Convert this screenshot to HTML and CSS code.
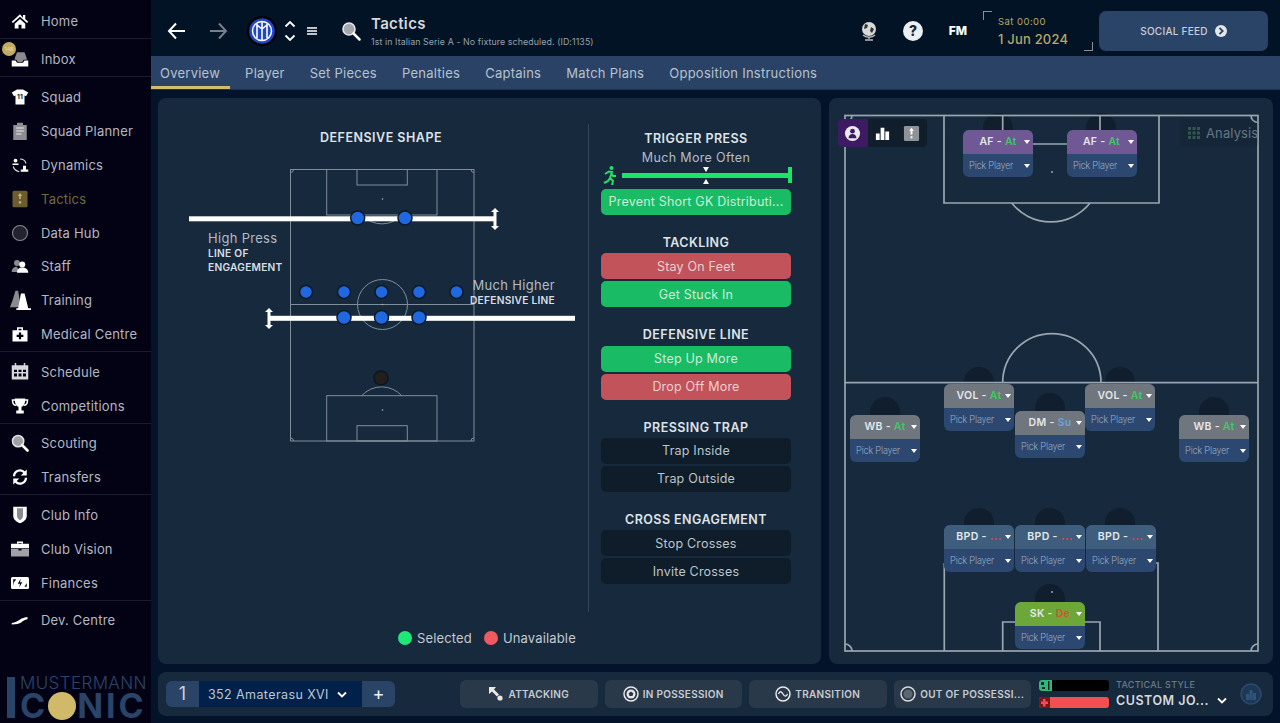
FILE: index.html
```html
<!DOCTYPE html>
<html lang="en">
<head>
<meta charset="utf-8">
<title>Tactics</title>
<link rel="stylesheet" href="styles.css">
</head>
<body>
<div class="app">
  <nav class="sidebar">
    <div class="group g-first">
      <a class="row"><svg class="ico" viewBox="0 0 24 24"><path fill="#fff" d="M12 3 1 13l1.600 1.700L12 6.400l9.400 8.300L23 13l-4-3.600V4h-3v3.700zM5 15.500 12 9.300l7 6.200V22h-5v-5h-4v5H5z"/></svg><span>Home</span></a>
    </div>
    <div class="group">
      <a class="row"><svg class="ico" viewBox="0 0 24 24"><path fill="#fff" d="M1 14h5l2 3h8l2-3h5v8H1z"/><path fill="#8a8a90" d="M5 11 8 3h10l3 8v2h-4l-2 3H9l-2-3H5z"/></svg><span>Inbox</span><b class="badge">148</b></a>
    </div>
    <div class="group g-squad">
      <a class="row"><svg class="ico" viewBox="0 0 24 24"><path fill="#fff" d="M8 2h8l7 4-3 5-2-1v12H6V10l-2 1-3-5z"/><text x="12" y="14" class="shirt-no">11</text></svg><span>Squad</span></a>
      <a class="row"><svg class="ico" viewBox="0 0 24 24"><path fill="#8d8d93" d="M3 4h5V1h8v3h5v20H3z"/><path fill="none" stroke="#eee" stroke-width="1.500" d="M7 8h10M7 12h10M7 16h7"/></svg><span>Squad Planner</span></a>
      <a class="row"><svg class="ico" viewBox="0 0 24 24"><circle cx="6" cy="6" r="2.500" fill="#fff"/><path fill="#fff" d="M2 10h8v2H2zM16 13h4v5h3v3h-10v-3h3z"/><path fill="none" stroke="#ddd" stroke-width="1.500" d="M12 4c4 0 7 2 8 6M3 14c1 4 4 6 8 7"/></svg><span>Dynamics</span></a>
      <a class="row tactics"><svg class="ico" viewBox="0 0 24 24"><rect x="2" y="1" width="20" height="22" rx="2" fill="#6b5d30"/><path fill="#c9b574" d="M12 4l3 4h-2v4h-2V8H9zM10.500 15h3v3h-3z"/></svg><span>Tactics</span></a>
      <a class="row"><svg class="ico" viewBox="0 0 24 24"><circle cx="12" cy="12" r="10" fill="#23232f" stroke="#85858f" stroke-width="1.500"/></svg><span>Data Hub</span></a>
      <a class="row"><svg class="ico" viewBox="0 0 24 24"><circle cx="8" cy="8" r="4" fill="#8a8a90"/><path fill="#8a8a90" d="M1 20c0-5 3-7 7-7l3 7z"/><circle cx="15" cy="10" r="4" fill="#fff"/><path fill="#fff" d="M8 21c0-5 3-7 7-7s8 2 8 7z"/></svg><span>Staff</span></a>
      <a class="row"><svg class="ico ico-wide" viewBox="0 0 24 24"><path fill="#8a8a90" d="M7 2h3l3 18H1l3-8z"/><path fill="#fff" d="M13 5h4l4 16h3v2H8v-2h2z"/></svg><span>Training</span></a>
      <a class="row"><svg class="ico" viewBox="0 0 24 24"><path fill="#fff" d="M8 3h8v4h6v15H2V7h6zm2 2v2h4V5z"/><path fill="#020214" d="M10.500 10h3v3h3v3h-3v3h-3v-3h-3v-3h3z"/></svg><span>Medical Centre</span></a>
    </div>
    <div class="group">
      <a class="row"><svg class="ico" viewBox="0 0 24 24"><path fill="#d8d8dc" d="M1 3h4V0h2v3h10V0h2v3h4v19H1z"/><path fill="#020214" d="M4 9h4v3H4zM10 9h4v3h-4zM16 9h4v3h-4zM4 14h4v4H4zM10 14h4v4h-4zM16 14h4v4h-4z"/></svg><span>Schedule</span></a>
      <a class="row"><svg class="ico" viewBox="0 0 24 24"><path fill="none" stroke="#fff" stroke-width="2" d="M6 4H2c0 4 2 7 5 7M18 4h4c0 4-2 7-5 7"/><path fill="#fff" d="M5 2h14c0 7-2 10-5 11v5h3v4H7v-4h3v-5C7 12 5 9 5 2z"/></svg><span>Competitions</span></a>
    </div>
    <div class="group">
      <a class="row"><svg class="ico" viewBox="0 0 24 24"><circle cx="9.500" cy="9.500" r="7.500" fill="#a0a0a6" stroke="#e4e4e8" stroke-width="2"/><path stroke="#fff" stroke-width="3.500" stroke-linecap="round" d="M15 15l7 7"/></svg><span>Scouting</span></a>
      <a class="row"><svg class="ico" viewBox="0 0 24 24"><path fill="none" stroke="#fff" stroke-width="3" d="M4 11a8 8 0 0 1 14-5M20 13a8 8 0 0 1-14 5"/><path fill="#fff" d="M21 2v8h-8zM3 22v-8h8z"/></svg><span>Transfers</span></a>
    </div>
    <div class="group">
      <a class="row"><svg class="ico" viewBox="0 0 24 24"><path fill="#fff" d="M3 1h18v12c0 5-4 8-9 10-5-2-9-5-9-10z"/><path fill="#8a8a90" d="M8 3h8v10c0 3-2 5-4 6-2-1-4-3-4-6z"/></svg><span>Club Info</span></a>
      <a class="row"><svg class="ico" viewBox="0 0 24 24"><path fill="#fff" d="M8 5V2h8v3h-2V4h-4v1z"/><path fill="#fff" d="M0 5h24v6H0z"/><path fill="#a0a0a6" d="M0 12h10v2h4v-2h10v10H0z"/></svg><span>Club Vision</span></a>
      <a class="row"><svg class="ico" viewBox="0 0 24 24"><rect y="4" width="24" height="16" rx="2" fill="#fff"/><path fill="#020214" d="M3 7h4l-3 4-1 5zM21 7v5l-3 5h3zM13 6l-4 7h3l-1 5 4-7h-3z"/></svg><span>Finances</span></a>
    </div>
    <div class="group g-last">
      <a class="row"><svg class="ico" viewBox="0 0 24 24"><path fill="#fff" d="M1 16c5-1 7-2 10-4 3-2 5-3 11-4v3c-4 1-6 2-8 4-3 2-7 3-13 3z"/></svg><span>Dev. Centre</span></a>
    </div>
    <div class="logo">
      <div class="logo-bar"></div>
      <div class="logo-text">
        <div class="logo-top">MUSTERMANN</div>
        <div class="logo-main">C<i class="logo-o"></i>NIC</div>
      </div>
    </div>
  </nav>

  <div class="main">
    <header class="topbar">
      <svg class="tb-arrow" viewBox="0 0 22 22"><path fill="none" stroke="#fff" stroke-width="2" d="M19 11H3M10 3.500 3 11l7 7.500"/></svg>
      <svg class="tb-arrow tb-fwd" viewBox="0 0 22 22"><path fill="none" stroke="#777f88" stroke-width="2" d="M3 11h16M12 3.500l7 7.500-7 7.500"/></svg>
      <svg class="tb-club" viewBox="0 0 30 30"><circle cx="15" cy="15" r="15" fill="#000"/><circle cx="15" cy="15" r="12.800" fill="#1f47c7"/><circle cx="15" cy="15" r="9.500" fill="none" stroke="#fff" stroke-width="1.500"/><path fill="none" stroke="#fff" stroke-width="1.600" d="M10 8v14M15 6v18M20 8v14M10 9l5 4M20 9l-5 4"/></svg>
      <div class="tb-updown">
        <svg viewBox="0 0 12 8"><path fill="none" stroke="#fff" stroke-width="1.800" d="M1.500 6.500 6 2l4.500 4.500"/></svg>
        <svg viewBox="0 0 12 8"><path fill="none" stroke="#fff" stroke-width="1.800" d="M1.500 1.500 6 6l4.500-4.500"/></svg>
      </div>
      <svg class="tb-menu" viewBox="0 0 10 8"><path stroke="#fff" stroke-width="1.500" d="M0 1h10M0 4h10M0 7h10"/></svg>
      <svg class="tb-search" viewBox="0 0 20 20"><circle cx="8" cy="8" r="6" fill="#a4a8ad" stroke="#e6e6e6" stroke-width="1.600"/><path stroke="#fff" stroke-width="2.500" stroke-linecap="round" d="m12.500 12.500 6 6"/></svg>
      <div class="tb-title">
        <div class="tb-name">Tactics</div>
        <div class="tb-sub">1st in Italian Serie A - No fixture scheduled. (ID:1135)</div>
      </div>
      <div class="tb-right">
        <svg class="tb-globe" viewBox="0 0 20 20"><circle cx="10" cy="8" r="7" fill="#d8d8d8"/><path fill="#333" d="M6 3l3 1-1 3-3 1zM12 6l3 2-2 4-2-2z"/><path fill="none" stroke="#bbb" stroke-width="1.400" d="M4 14c3 3 9 3 12 0M10 16v2M6 19h8"/></svg>
        <div class="tb-help">?</div>
        <div class="tb-fm">FM</div>
        <div class="tb-date">
          <div class="tb-day">Sat 00:00</div>
          <div class="tb-full">1 Jun 2024</div>
        </div>
        <button class="social">SOCIAL FEED <svg viewBox="0 0 12 12"><circle cx="6" cy="6" r="6" fill="#e4e7ea"/><path fill="none" stroke="#2a4468" stroke-width="1.800" d="M4.500 2.800 7.700 6l-3.200 3.200"/></svg></button>
      </div>
    </header>

    <div class="tabs">
      <a class="tab on">Overview</a>
      <a class="tab">Player</a>
      <a class="tab">Set Pieces</a>
      <a class="tab">Penalties</a>
      <a class="tab">Captains</a>
      <a class="tab">Match Plans</a>
      <a class="tab">Opposition Instructions</a>
    </div>

    <div class="content">
      <section class="panel p-left">
        <div class="shape">
          <h3 class="shape-title">DEFENSIVE SHAPE</h3>
          <div class="diagram">
            <svg class="diagram-svg" viewBox="158 160 430 290">
              <g class="pl-thin">
                <rect x="290.500" y="169.500" width="183.500" height="271.500"/>
                <rect x="326.700" y="169.500" width="110.300" height="45.500"/>
                <rect x="357" y="169.500" width="50.300" height="15.500"/>
                <path d="M362 215a27 27 0 0 0 40 0M290.500 304.500H474M361.700 395.700a27 27 0 0 1 40 0M293.500 169.500a3 3 0 0 1-3 3M471 169.500a3 3 0 0 0 3 3M290.500 438a3 3 0 0 1 3 3M471 441a3 3 0 0 1 3-3"/>
                <circle cx="382.500" cy="304.500" r="25"/>
                <rect x="326.700" y="395.700" width="110.300" height="45.300"/>
                <rect x="357" y="425.700" width="50.300" height="15.300"/>
              </g>
              <circle cx="382.500" cy="199" r=".8" fill="#aab4bd"/><circle cx="382.500" cy="410" r=".8" fill="#aab4bd"/><circle cx="382.500" cy="304.500" r=".8" fill="#aab4bd"/>
              <rect x="189" y="216.300" width="305" height="5" fill="#fff"/>
              <rect x="270" y="315.800" width="305" height="5" fill="#fff"/>
              <path fill="#fff" d="M495 208l4 4h-2.500v14H499l-4 4-4-4h2.500v-14H491zM269 308l4 4h-2.500v13H273l-4 4-4-4h2.500v-13H265z"/>
              <g class="dot">
                <circle cx="357.700" cy="218" r="7"/><circle cx="405" cy="218" r="7"/>
                <circle cx="306" cy="292" r="6.500"/><circle cx="344" cy="292" r="6.500"/><circle cx="381.500" cy="292" r="6.500"/><circle cx="419" cy="292" r="6.500"/><circle cx="456.500" cy="292" r="6.500"/>
                <circle cx="344" cy="317.500" r="7"/><circle cx="381.500" cy="317.500" r="7"/><circle cx="419" cy="317.500" r="7"/>
              </g>
              <circle cx="381" cy="378" r="7" fill="#221f1c" stroke="#0c1622" stroke-width="1.500"/>
            </svg>
            <div class="lbl lbl-press"><div class="lbl-val">High Press</div><div class="lbl-key">LINE OF<br>ENGAGEMENT</div></div>
            <div class="lbl lbl-line"><div class="lbl-val">Much Higher</div><div class="lbl-key">DEFENSIVE LINE</div></div>
          </div>
          <div class="legend">
            <i class="leg-dot leg-sel"></i><span>Selected</span>
            <i class="leg-dot leg-un"></i><span>Unavailable</span>
          </div>
        </div>
        <div class="divider"></div>
        <div class="instr">
          <div class="sec">
            <h4>TRIGGER PRESS</h4>
            <div class="sec-val">Much More Often</div>
            <div class="slider">
              <svg class="runner" viewBox="0 0 14 19"><circle cx="8.500" cy="2" r="2" fill="#1ce36a"/><path fill="none" stroke="#1ce36a" stroke-width="2" d="M2 8l4-2.500 3 .5-2 6 3 3-1 4M7 12l-2 3-4 2M8 7l2 3h3"/></svg>
              <div class="track"><i class="tk-down"></i><i class="tk-up"></i></div>
            </div>
            <button class="opt green">Prevent Short GK Distributi...</button>
          </div>
          <div class="sec">
            <h4>TACKLING</h4>
            <button class="opt red">Stay On Feet</button>
            <button class="opt green">Get Stuck In</button>
          </div>
          <div class="sec">
            <h4>DEFENSIVE LINE</h4>
            <button class="opt green">Step Up More</button>
            <button class="opt red">Drop Off More</button>
          </div>
          <div class="sec">
            <h4>PRESSING TRAP</h4>
            <button class="opt dark">Trap Inside</button>
            <button class="opt dark">Trap Outside</button>
          </div>
          <div class="sec">
            <h4>CROSS ENGAGEMENT</h4>
            <button class="opt dark">Stop Crosses</button>
            <button class="opt dark">Invite Crosses</button>
          </div>
        </div>
      </section>

      <section class="panel p-right">
        <svg class="pitch" viewBox="829 98 444 566">
          <g fill="#101e2e">
            <circle cx="998" cy="128" r="15"/><circle cx="1101" cy="128" r="15"/>
            <circle cx="979" cy="382" r="15"/><circle cx="1120" cy="382" r="15"/><circle cx="1050" cy="408" r="15"/>
            <circle cx="885" cy="412" r="15"/><circle cx="1214" cy="412" r="15"/>
            <circle cx="979" cy="523" r="15"/><circle cx="1050" cy="523" r="15"/><circle cx="1120" cy="523" r="15"/><circle cx="1050" cy="599" r="15"/>
          </g>
          <g class="pl-thick">
            <rect x="845" y="115.500" width="413" height="535.500"/>
            <path d="M845 382.700h413M1002.700 382.700a49 49 0 0 1 98.300 0M944 115.500V203h215V115.500M1011.700 203a50 50 0 0 0 78.300 0M1002.700 115.500V144h97.300v-28.500M944.300 651v-88M1158 651v-88h-6M1002.700 651v-29h97.300v29M1251 115.500a7 7 0 0 0 7 7M845 644a7 7 0 0 1 7 7M1251 651a7 7 0 0 1 7-7M852 115.500a7 7 0 0 1-7 7"/>
          </g>
          <circle cx="1052" cy="172" r=".9" fill="#aab4bd"/><circle cx="1052" cy="592" r=".9" fill="#aab4bd"/>
        </svg>

        <div class="pitch-tabs">
          <span class="pt on"><svg viewBox="0 0 18 18"><circle cx="9" cy="9" r="8" fill="#ece9f1"/><circle cx="9" cy="6.500" r="2.500" fill="#3d1b63"/><path fill="#3d1b63" d="M4.800 14c0-3 2-4.500 4.200-4.500s4.200 1.500 4.200 4.500z"/></svg></span>
          <span class="pt"><svg viewBox="0 0 18 18"><path fill="#fff" d="M2 9h4v7H2zM7 3h4v13H7zM12 7h4v9h-4z"/></svg></span>
          <span class="pt"><svg viewBox="0 0 18 18"><rect x="1" y="1" width="16" height="16" rx="1.500" fill="#8f9296"/><path fill="#fff" d="M9 3l2.500 3H10v4H8V6H6.500zM8 12h2v2H8z"/></svg></span>
        </div>
        <div class="analysis"><svg viewBox="0 0 12 12"><path fill="#35564f" d="M0 0h3v3H0zM4.500 0h3v3h-3zM9 0h3v3H9zM0 4.500h3v3H0zM4.500 4.500h3v3h-3zM9 4.500h3v3H9zM0 9h3v3H0zM4.500 9h3v3h-3zM9 9h3v3H9z"/></svg>Analysis</div>

        <div class="card af af1"><div class="c-head">AF - <em class="at">At</em></div><div class="c-body"><span class="pick">Pick Player</span></div></div>
        <div class="card af af2"><div class="c-head">AF - <em class="at">At</em></div><div class="c-body"><span class="pick">Pick Player</span></div></div>
        <div class="card grey vol1"><div class="c-head">VOL - <em class="at">At</em></div><div class="c-body"><span class="pick">Pick Player</span></div></div>
        <div class="card grey vol2"><div class="c-head">VOL - <em class="at">At</em></div><div class="c-body"><span class="pick">Pick Player</span></div></div>
        <div class="card grey dm"><div class="c-head">DM - <em class="su">Su</em></div><div class="c-body"><span class="pick">Pick Player</span></div></div>
        <div class="card grey wb1"><div class="c-head">WB - <em class="at">At</em></div><div class="c-body"><span class="pick">Pick Player</span></div></div>
        <div class="card grey wb2"><div class="c-head">WB - <em class="at">At</em></div><div class="c-body"><span class="pick">Pick Player</span></div></div>
        <div class="card def bpd1"><div class="c-head">BPD - <em class="de">...</em></div><div class="c-body"><span class="pick">Pick Player</span></div></div>
        <div class="card def bpd2"><div class="c-head">BPD - <em class="de">...</em></div><div class="c-body"><span class="pick">Pick Player</span></div></div>
        <div class="card def bpd3"><div class="c-head">BPD - <em class="de">...</em></div><div class="c-body"><span class="pick">Pick Player</span></div></div>
        <div class="card gk sk"><div class="c-head">SK - <em class="de2">De</em></div><div class="c-body"><span class="pick">Pick Player</span></div></div>
      </section>
    </div>

    <footer class="bottom">
      <div class="tactic-sel">
        <span class="ts-num">1</span>
        <span class="ts-name">352 Amaterasu XVI <svg viewBox="0 0 10 7"><path fill="none" stroke="#fff" stroke-width="1.800" d="M1 1.500l4 4 4-4"/></svg></span>
        <span class="ts-add">+</span>
      </div>
      <div class="phases">
        <button class="phase"><svg viewBox="0 0 16 16"><path fill="#e8e8e8" d="M1 1h7L6 3.500l5 5L9 10.500l-5-5L1 8z"/><circle cx="12" cy="12" r="2.600" fill="#e8e8e8"/></svg>ATTACKING</button>
        <button class="phase"><svg viewBox="0 0 16 16"><circle cx="8" cy="8" r="7" fill="none" stroke="#e8e8e8" stroke-width="1.500"/><circle cx="8" cy="8" r="4.500" fill="#e8e8e8"/><path fill="#2a3949" d="M8 5.500l2.400 1.700-.9 2.800h-3l-.9-2.800z"/></svg>IN POSSESSION</button>
        <button class="phase"><svg viewBox="0 0 16 16"><circle cx="8" cy="8" r="7" fill="none" stroke="#e8e8e8" stroke-width="1.500"/><path fill="none" stroke="#e8e8e8" stroke-width="1.300" d="M3.500 8c1-3 3-3 4.500 0s3.500 2.500 4.500 0"/></svg>TRANSITION</button>
        <button class="phase"><svg viewBox="0 0 16 16"><circle cx="8" cy="8" r="7" fill="none" stroke="#d8d8d8" stroke-width="1.500"/><circle cx="8" cy="8" r="4.500" fill="#5b6672"/></svg>OUT OF POSSESSI...</button>
      </div>
      <div class="gauges">
        <div class="gauge"><svg class="g-ico g-att" viewBox="0 0 13 11"><rect width="13" height="11" fill="#33b57f"/><path fill="#0b2a1e" d="M2 2h3v3H2zM3 7h3v2H3zM9 1h1.500v9H9z"/></svg></div>
        <div class="gauge g-red"><svg class="g-ico g-def" viewBox="0 0 11 11"><rect width="11" height="11" fill="#7d1418"/><path fill="#f0504f" d="M4 2h2.500v2.500H9V7H6.500v2.500H4V7H2V4.500h2z"/></svg></div>
      </div>
      <div class="style">
        <div class="st-key">TACTICAL STYLE</div>
        <div class="st-val">CUSTOM JO...</div>
      </div>
      <svg class="st-chev" viewBox="0 0 10 7"><path fill="none" stroke="#fff" stroke-width="1.800" d="M1 1.500l4 4 4-4"/></svg>
      <svg class="st-chart" viewBox="0 0 22 22"><circle cx="11" cy="11" r="10" fill="#1d3854" stroke="#294a6e" stroke-width="1.500"/><path fill="#2f5479" d="M6 11h3v6H6zM9.500 7h3v10h-3zM13 10h3v7h-3z"/></svg>
    </footer>
  </div>
</div>
</body>
</html>
```
FILE: styles.css
```css
* { box-sizing: border-box; }
html, body { margin: 0; padding: 0; }
body {
  width: 1280px; height: 723px; overflow: hidden;
  font-family: Inter, "Noto Sans", "Liberation Sans", sans-serif;
  background: #03132a; color: #d9dee3;
}
.app { display: flex; width: 1280px; height: 723px; }

/* sidebar */
.sidebar { width: 151px; flex: none; background: #020214; display: flex; flex-direction: column; }
.group { padding-top: 3px; border-bottom: 1px solid #1a1c2e; }
.g-first, .g-squad { padding-top: 4px; }
.g-last { border-bottom: 0; }
.row { position: relative; display: flex; align-items: center; height: 33.8px; padding-left: 11px; gap: 12px; font-size: 13px; letter-spacing: .2px; color: #b4b7c3; }
.ico { width: 18px; height: 18px; flex: none; }
.ico-wide { width: 22px; height: 22px; margin: 0 -2px; }
.tactics { color: #74693f; }
.badge { position: absolute; left: 2px; top: 0; width: 14px; height: 14px; border-radius: 50%; background: #c3ab63; color: #e8dcae; font-size: 5px; font-weight: 400; letter-spacing: 0; line-height: 14px; text-align: center; }
.shirt-no { font-size: 9px; font-weight: 700; text-anchor: middle; fill: #222; }
.logo { margin-top: auto; height: 41px; margin-bottom: 5px; margin-left: 7px; display: flex; gap: 5px; color: #2a4468; }
.logo-bar { width: 8px; height: 41px; flex: none; background: #2a4468; }
.logo-top { height: 12px; font-size: 17px; line-height: 12px; font-weight: 300; letter-spacing: .4px; color: #2d4568; white-space: nowrap; }
.logo-main { display: flex; align-items: center; height: 24px; margin-top: 5px; font-size: 34px; line-height: 24px; font-weight: 700; letter-spacing: 3px; }
.logo-o { display: block; width: 28px; height: 28px; flex: none; margin: 0 1px 0 0; border-radius: 50%; background: #d0b968; }

/* main */
.main { flex: 1; min-width: 0; display: flex; flex-direction: column; }
.topbar { height: 56px; flex: none; background: #021325; display: flex; align-items: center; padding: 5px 12px 0 15px; }
.tb-arrow { width: 22px; height: 22px; }
.tb-fwd { margin-left: 19px; }
.tb-club { width: 30px; height: 30px; margin-left: 18px; }
.tb-updown { width: 12px; margin-left: 7px; display: flex; flex-direction: column; gap: 6px; }
.tb-updown svg { display: block; width: 12px; height: 8px; }
.tb-menu { width: 10px; height: 8px; margin-left: 11px; }
.tb-search { width: 20px; height: 20px; margin-left: 24px; }
.tb-title { margin-left: 10px; }
.tb-name { font-size: 15px; font-weight: 600; line-height: 18px; color: #d3d8dd; letter-spacing: .35px; }
.tb-sub { font-size: 8.800px; line-height: 10px; color: #96a2ad; margin-top: 4px; letter-spacing: .1px; white-space: nowrap; }
.tb-right { margin-left: auto; display: flex; align-items: center; }
.tb-globe { width: 20px; height: 20px; }
.tb-help { width: 20px; height: 20px; margin-left: 24px; border-radius: 50%; background: #eceff1; color: #14243a; font-size: 14px; font-weight: 800; text-align: center; line-height: 20px; }
.tb-fm { width: 20px; margin-left: 25px; color: #fff; font-size: 12px; font-weight: 800; text-align: center; }
.tb-date { position: relative; width: 110px; height: 40px; margin-left: 15px; padding: 5px 0 0 15px; color: #b7a766; }
.tb-date::before, .tb-date::after { content: ""; position: absolute; width: 8px; height: 8px; border: 0 solid #8a8f94; }
.tb-date::before { left: 0; top: 0; border-width: 1px 0 0 1px; }
.tb-date::after { right: 0; bottom: 0; border-width: 0 1px 1px 0; }
.tb-day { font-size: 9.500px; line-height: 12px; letter-spacing: .45px; }
.tb-full { font-size: 13px; line-height: 18px; margin-top: 2px; letter-spacing: .2px; font-weight: 500; }
.social { width: 169px; height: 40px; margin-left: 6px; border: 0; border-radius: 7px; background: #2a4468; color: #c8d0d8; font: 500 10px Inter, sans-serif; letter-spacing: .25px; display: flex; align-items: center; justify-content: center; gap: 7px; }
.social svg { width: 12px; height: 12px; }

.tabs { height: 34px; flex: none; background: #2a4266; display: flex; gap: 25px; padding-left: 9px; box-shadow: inset 0 -1px 0 #1e3350; }
.tab { position: relative; font-size: 13px; line-height: 34px; letter-spacing: .25px; color: #b6c2cd; }
.tab.on::after { content: ""; position: absolute; left: -9px; right: -10px; top: 29.500px; height: 3px; background: #d2bd6f; }

.content { flex: none; height: 566px; margin: 8px 7px 0; display: flex; gap: 8px; }
.panel { position: relative; background: #17293c; border-radius: 8px; height: 566px; }
.p-left { width: 663px; display: flex; }
.p-right { width: 444px; }

.shape { width: 430px; display: flex; flex-direction: column; }
.shape-title { margin: 32px 0 0; padding-left: 16px; text-align: center; font-size: 12.500px; line-height: 16px; font-weight: 600; letter-spacing: .5px; color: #dfe3e7; }
.diagram { position: relative; width: 430px; height: 290px; margin-top: 14px; }
.diagram-svg { display: block; width: 430px; height: 290px; }
.pl-thin * { fill: none; stroke: #7f8e9b; stroke-width: 1; }
.dot circle { fill: #1f68e0; stroke: #0d1a29; stroke-width: 1.500; }
.lbl { position: absolute; }
.lbl-press { left: 50px; top: 70px; }
.lbl-line { right: 33px; top: 117px; text-align: right; }
.lbl-val { font-size: 13px; line-height: 16px; color: #b3bcc5; letter-spacing: .3px; }
.lbl-key { font-size: 10.200px; line-height: 14px; font-weight: 600; color: #d9dee3; letter-spacing: .25px; white-space: nowrap; }
.legend { margin: auto 0 16px 240px; display: flex; align-items: center; height: 20px; font-size: 13px; letter-spacing: .15px; color: #c3cad1; }
.leg-dot { width: 14px; height: 14px; border-radius: 50%; margin-right: 5px; }
.leg-sel { background: #1ee878; }
.leg-un { background: #ef5a5f; margin-left: 12px; }
.divider { width: 1px; margin: 26px 0 52px; background: #33455a; }

.instr { width: 190px; margin-left: 12px; padding-top: 28px; }
.sec { display: flex; flex-direction: column; gap: 2px; margin-bottom: 14px; }
.sec h4 { margin: 0 0 -2px; height: 24.300px; line-height: 27px; text-align: center; font-size: 12.500px; font-weight: 600; letter-spacing: .45px; color: #dfe3e7; white-space: nowrap; }
.sec-val { height: 16px; line-height: 16px; text-align: center; font-size: 12.500px; letter-spacing: .35px; color: #b3bcc5; }
.sec:first-child h4 { margin-bottom: 0; margin-top: -1px; }
.sec:first-child .sec-val { margin-top: -1px; }
.slider { display: flex; align-items: center; height: 20px; margin-top: -3px; margin-bottom: 1.700px; padding-left: 2px; }
.runner { width: 14px; height: 19px; flex: none; }
.track { position: relative; flex: 1; height: 5px; margin-left: 5px; background: #1ce36a; }
.track::after { content: ""; position: absolute; right: -1px; top: -6px; width: 4px; height: 16px; background: #1ce36a; }
.tk-down, .tk-up { position: absolute; left: 81px; width: 0; height: 0; border-left: 3px solid transparent; border-right: 3px solid transparent; }
.tk-down { top: -6px; border-top: 5px solid #fff; }
.tk-up { top: 6px; border-bottom: 5px solid #fff; }
.opt { height: 26px; width: 190px; border: 0; border-radius: 5px; padding: 0; font: 400 12.500px Inter, sans-serif; letter-spacing: .2px; }
.green { background: #1abb65; color: #c9efd9; }
.red { background: #c2535a; color: #eccfd1; }
.dark { background: #0f1c2a; color: #bcc4cc; }

/* right pitch */
.pitch { display: block; position: absolute; left: 0; top: 0; width: 444px; height: 566px; }
.pl-thick * { fill: none; stroke: #9aa6b0; stroke-width: 1.700; }
.pitch-tabs { position: absolute; left: 9px; top: 21px; display: flex; height: 28px; border-radius: 4px; overflow: hidden; background: #101e2b; }
.pt { width: 29.500px; display: flex; align-items: center; justify-content: center; }
.pt.on { background: #3d1b63; }
.pt svg { width: 17px; height: 17px; }
.analysis { position: absolute; left: 351px; top: 21px; height: 28px; padding: 0 0 0 8px; display: flex; align-items: center; gap: 6px; font-size: 13px; letter-spacing: .12px; color: #667684; background: rgba(16, 30, 43, .15); border-radius: 4px; }
.analysis svg { width: 12px; height: 12px; }

.card { position: absolute; width: 70px; height: 47px; border-radius: 6px; overflow: hidden; background: #2c4870; }
.c-head, .c-body { position: relative; height: 23.500px; line-height: 23px; }
.c-head { text-align: center; font-size: 10.500px; font-weight: 600; letter-spacing: .3px; color: #e4e7ea; }
.c-body { padding-left: 6px; font-family: Roboto, sans-serif; font-size: 11.500px; font-weight: 300; color: #a0b1c4; }
.pick { display: inline-block; white-space: nowrap; transform: scaleX(.8); transform-origin: left center; }
.c-head::after, .c-body::after { content: ""; position: absolute; right: 3px; top: 10px; border-left: 3px solid transparent; border-right: 3px solid transparent; border-top: 4px solid #fff; }
.c-head em { font-style: normal; }
.at { color: #3ecb5f; }
.su { color: #6ba2dc; }
.de { color: #d0484f; font-weight: 800; }
.de2 { color: #d4522f; }
.af .c-head { background: #6f5893; }
.grey .c-head { background: #70767d; }
.def .c-head { background: #3f5e7e; }
.gk .c-head { background: #6ea739; }
.af1 { left: 134px; top: 32px; }
.af2 { left: 237.500px; top: 32px; }
.vol1 { left: 115px; top: 286px; }
.vol2 { left: 256px; top: 286px; }
.dm { left: 186px; top: 313px; }
.wb1 { left: 21px; top: 317px; }
.wb2 { left: 350px; top: 317px; }
.bpd1 { left: 115px; top: 427px; }
.bpd2 { left: 186px; top: 427px; }
.bpd3 { left: 256.500px; top: 427px; }
.sk { left: 186px; top: 504px; }

/* bottom */
.bottom { height: 44px; flex: none; margin: 8px 7px 0; background: #17293c; border-radius: 8px; display: flex; align-items: center; padding-left: 8px; }
.tactic-sel { display: flex; height: 26px; width: 229px; flex: none; border-radius: 6px; overflow: hidden; }
.ts-num { width: 33px; background: #2a4468; color: #c8d0d8; font-size: 18px; text-align: center; line-height: 26px; font-weight: 400; }
.ts-name { flex: 1; background: #02214a; display: flex; align-items: center; padding-left: 9px; font-size: 12.500px; letter-spacing: .4px; color: #bcc6d0; gap: 8px; white-space: nowrap; }
.ts-name svg { width: 10px; height: 7px; }
.ts-add { width: 33px; background: #2a4468; color: #eef1f3; font-size: 18px; text-align: center; line-height: 25px; }
.phases { display: flex; gap: 7px; margin-left: 65px; flex: none; }
.phase { width: 137.500px; height: 28px; border: 0; border-radius: 6px; background: #2a3949; color: #c6ccd2; font: 600 10px Inter, sans-serif; letter-spacing: .3px; display: flex; align-items: center; justify-content: center; gap: 4px; white-space: nowrap; padding: 0; }
.phase svg { width: 16px; height: 16px; }
.gauges { width: 70px; margin-left: 8px; display: flex; flex-direction: column; gap: 6px; flex: none; }
.gauge { height: 11px; background: #000; border-radius: 3px; overflow: hidden; }
.g-ico { display: block; height: 11px; }
.g-att { width: 13px; }
.g-red { background: #f0504f; }
.g-def { width: 11px; }
.style { margin-left: 7px; width: 100px; flex: none; }
.st-key { font-size: 9px; line-height: 12px; font-weight: 500; color: #6b7b8a; letter-spacing: .3px; }
.st-val { font-size: 12.500px; line-height: 16px; font-weight: 600; color: #d5dade; letter-spacing: .5px; margin-top: 2px; white-space: nowrap; }
.st-chev { width: 10px; height: 7px; margin-left: 1px; margin-top: 12px; flex: none; }
.st-chart { width: 22px; height: 22px; margin-left: 13px; flex: none; }
```
